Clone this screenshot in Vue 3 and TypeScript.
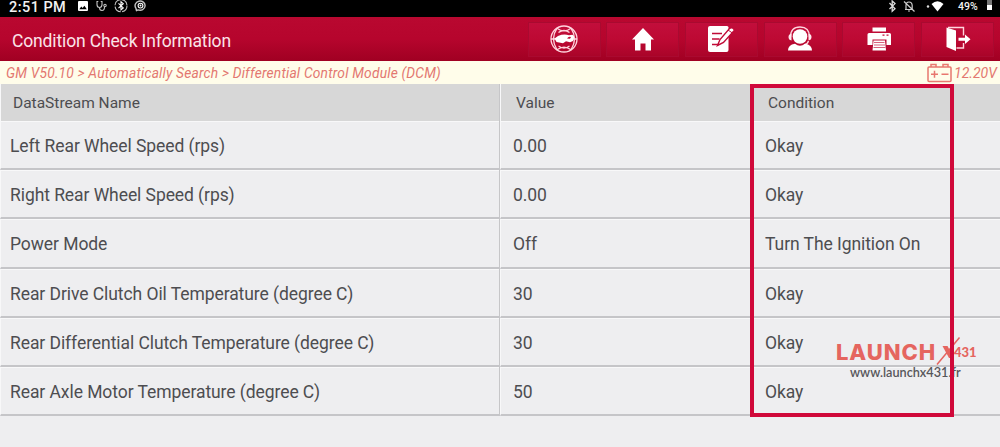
<template>
  <div class="screen">
    <div class="status">
      <span class="clock">2:51 PM</span>
      <svg class="status-left" width="76" height="17" viewBox="0 0 76 17">
        <path fill="#fff" fill-rule="evenodd" d="M2 1h8q1 0 1 1v8q0 1-1 1h-8q-1 0-1-1v-8q0-1 1-1zM2.300 9.300h7.500L7.400 5.700 5.600 8 4.300 6.500z" />
        <g fill="none" stroke="#c4c4c4" stroke-width="1.100">
          <path d="M21.300 1.500h-1.300v3q0 3 2.500 3t2.500-3v-3h-1.300M22.500 7.500q0 3 2.500 3t2.500-3.500" />
          <circle cx="28" cy="5.500" r="1.200" />
          <circle cx="44" cy="5.700" r="6" stroke-dasharray="8 1.400" />
          <path d="M41.500 3.300l4.800 4.600-2.300 2V1.700l2.300 2-4.800 4.500" stroke="#fff" />
          <path d="M59.500 10.500l-.6-2.300a5 4.600 0 1 1 2.200 1.700z" stroke-width="1.400" />
          <circle cx="63.500" cy="5.600" r="2.400" stroke="#fff" />
        </g>
        <circle cx="63.500" cy="5.600" r="1" fill="#fff" />
      </svg>
      <svg class="status-right" width="68" height="17" viewBox="0 0 68 17">
        <path d="M2.500 3l5.500 5.700-2.800 2.600V1l2.800 2.600L2.500 9" fill="none" stroke="#ddd" stroke-width="1.300" />
        <g fill="none" stroke="#ccc" stroke-width="1.200">
          <path d="M18 9.500h8M19 9V5.500q0-3.500 3-3.500t3.200 3.500V9M21 11h2M17 1.500l10.500 10" />
        </g>
        <circle cx="41" cy="6.500" r="1.200" fill="#ddd" />
        <path d="M44.500 4q6-5.500 12 0L50.500 11.500z" fill="#fff" />
      </svg>
      <span class="percent">49%</span>
      <span class="battery"></span>
    </div>

    <header class="topbar">
      <h1>Condition Check Information</h1>
      <nav>
        <button v-for="name in tools" :key="name" type="button" :aria-label="name">
          <svg v-if="name === 'globe'" width="30" height="30" viewBox="0 0 30 30">
            <g fill="none" stroke="#ffd5de" stroke-width="1.300">
              <circle cx="15" cy="15" r="13" />
              <path d="M8 4.200q7 5.300 14 0M8 25.800q7-5.300 14 0M8 4.200q-7 10.800 0 21.600M22 4.200q7 10.800 0 21.600M9.500 8.500q5.500-4 11 0M9.500 22q5.500 4 11 0" />
              <path d="M2 15h4M24 15h4" />
            </g>
            <path d="M5.500 14.500l3.500-2.500q6-2.500 11-.7l3.500-.6q2 1 1.500 3l-1 3.300-3 1.200-4-1-3 2-6.500-1.200z" fill="#fff" />
            <path d="M18 14.500q1.500-2.500 4-1.500l-1 1.800z" fill="#bd0932" />
          </svg>
          <svg v-else-if="name === 'home'" width="30" height="30" viewBox="0 0 30 30">
            <path d="M15 4L26 15.500h-3V26.500h-5.500v-7h-5v7H7V15.500H4z" fill="#fff" />
          </svg>
          <svg v-else-if="name === 'edit'" width="30" height="30" viewBox="0 0 30 30">
            <path d="M4 2h17q1.500 0 1.500 1.500V26q0 2-2 2H4q-2 0-2-2V4q0-2 2-2z" fill="#fff" />
            <path d="M6 9.500h10M6 15h7.500M6 20.500h7" stroke="#c00a37" stroke-width="1.500" />
            <path d="M11.500 21.500l2.500-6L23.500 4.500q3-2 5 1.700L17.500 18.500z" fill="#fff" stroke="#c00a37" stroke-width="1.400" />
            <path d="M22 6l4.700 3.200" stroke="#c00a37" />
          </svg>
          <svg v-else-if="name === 'support'" width="30" height="30" viewBox="0 0 30 30">
            <circle cx="15" cy="12.500" r="7.300" fill="#fff" />
            <path d="M5.500 13Q5.500 3 15 3t9.500 10M23.500 17q-1 3.500-4.500 4" fill="none" stroke="#ffd5de" stroke-width="1.300" />
            <path d="M6.500 9.500v7Q3.500 16 3.500 13t3-3.500zM23.500 9.500v7q3-.5 3-3.500t-3-3.500z" fill="#ffe9ee" />
            <path d="M3 26.500q0-5.500 7-6.700 5 3.700 10 0 7 1.200 7 6.700z" fill="#fff" />
          </svg>
          <svg v-else-if="name === 'print'" width="30" height="30" viewBox="0 0 30 30">
            <path d="M8.500 3.500h13.500v4H8.500zM5 9h20.500q1.500 0 1.500 1.500v10.500h-4.500v-5.500h-14V21H3.500V10.500Q3.500 9 5 9z" fill="#fff" />
            <path d="M9.500 16.500h11.500l1 10H8.500z" fill="#fff" />
            <path d="M10 18.500h10.500M10 21h11M9.500 23.500h12" stroke="#d7637d" stroke-width="1" />
            <path d="M18.500 11.200h2M22.500 11.200h2" stroke="#c00a37" stroke-width="1.300" />
          </svg>
          <svg v-else width="30" height="30" viewBox="0 0 30 30">
            <path d="M3.500 3.500L13 6.500v20.500L3.500 23z" fill="#fff" />
            <path d="M5 3.500h15.500v8M20.500 19v5h-7" fill="none" stroke="#ffd5de" stroke-width="1.400" />
            <path d="M15.500 13.700h6.500V10.500l5.500 4.700-5.500 4.700v-3.200h-6.500z" fill="#fff" />
          </svg>
        </button>
      </nav>
    </header>

    <div class="crumbs">
      <span class="path">GM V50.10 &gt; Automatically Search &gt; Differential Control Module (DCM)</span>
      <span class="voltage">
        <svg width="26" height="20" viewBox="0 0 26 20">
          <g fill="none" stroke="#e8776f" stroke-width="1.500">
            <rect x="1" y="4" width="23" height="14.500" rx="1" />
            <path d="M4 4V1.500h5V4M16 4V1.500h5V4M4 11.300h7M7.500 7.800v7M14.500 11.300h7" />
          </g>
        </svg>
        <span>12.20V</span>
      </span>
    </div>

    <div class="table">
      <div class="row head">
        <div v-for="col in columns" :key="col" class="cell">{{ col }}</div>
      </div>
      <div v-for="row in rows" :key="row.name" class="row">
        <div class="cell">{{ row.name }}</div>
        <div class="cell">{{ row.value }}</div>
        <div class="cell">{{ row.condition }}</div>
      </div>
    </div>

    <div class="watermark">
      <span class="brand">LAUNCH</span>
      <svg width="26" height="30" viewBox="0 0 26 30">
        <path d="M1 28.500L23.500 1.500" stroke="#e5655f" stroke-width="1.500" />
        <path d="M6.500 10h5l6.500 12h-5z" fill="#e5655f" />
      </svg>
      <span class="model">431</span>
      <span class="site">www.launchx431.fr</span>
    </div>
    <div class="highlight"></div>
  </div>
</template>

<script setup lang="ts">
interface StreamRow {
  name: string
  value: string
  condition: string
}

const tools: string[] = ['globe', 'home', 'edit', 'support', 'print', 'exit']
const columns: string[] = ['DataStream Name', 'Value', 'Condition']
const rows: StreamRow[] = [
  { name: 'Left Rear Wheel Speed (rps)', value: '0.00', condition: 'Okay' },
  { name: 'Right Rear Wheel Speed (rps)', value: '0.00', condition: 'Okay' },
  { name: 'Power Mode', value: 'Off', condition: 'Turn The Ignition On' },
  { name: 'Rear Drive Clutch Oil Temperature (degree C)', value: '30', condition: 'Okay' },
  { name: 'Rear Differential Clutch Temperature (degree C)', value: '30', condition: 'Okay' },
  { name: 'Rear Axle Motor Temperature (degree C)', value: '50', condition: 'Okay' },
]
</script>

<style>
body {
  margin: 0;
  background: #eeeef0;
}
</style>

<style scoped>
.screen {
  position: relative;
  width: 1000px;
  height: 447px;
  overflow: hidden;
  background: #eeeef0;
  font-family: Roboto, sans-serif;
  color: #4d4d50;
}
.status {
  display: flex;
  height: 17px;
  background: #000;
  color: #f2f2f2;
}
.clock {
  width: 68px;
  padding-left: 9px;
  font-size: 14.5px;
  line-height: 15px;
  font-weight: 500;
  letter-spacing: 0.45px;
  white-space: nowrap;
}
.status-right {
  margin-left: 734px;
}
.percent {
  width: 29px;
  margin-left: 3px;
  font-size: 10.5px;
  line-height: 13px;
  font-weight: 500;
}
.battery {
  width: 5px;
  height: 10px;
  background: linear-gradient(#777 50%, #fff 50%);
}
.topbar {
  display: flex;
  align-items: center;
  justify-content: space-between;
  height: 44px;
  box-sizing: border-box;
  padding: 0 6px 0 12px;
  background: linear-gradient(#b90830, #b6052d 50%, #a00022);
}
.topbar h1 {
  margin: 0;
  padding-top: 3px;
  font-size: 17.5px;
  letter-spacing: -0.14px;
  font-weight: 400;
  color: #fbe3e8;
  white-space: nowrap;
}
nav {
  display: flex;
  gap: 5.7px;
}
nav button {
  display: flex;
  align-items: center;
  justify-content: center;
  width: 73px;
  height: 35px;
  padding: 0;
  border: 1px solid #a90a30;
  background: linear-gradient(#c20e3b, #bd0933 50%, #aa0429);
}
.crumbs {
  display: flex;
  align-items: center;
  justify-content: space-between;
  height: 23px;
  padding: 0 3px 0 6px;
  background: #fffdea;
  color: #e37770;
  font-size: 13.8px;
  letter-spacing: 0.19px;
  font-style: italic;
  white-space: nowrap;
}
.voltage {
  display: flex;
  align-items: center;
  gap: 1px;
  font-size: 14px;
  letter-spacing: 0.05px;
}
.voltage span {
  padding-top: 1px;
}
.row {
  display: grid;
  grid-template-columns: 500px 252px 1fr;
  height: 49.2px;
}
.cell {
  display: flex;
  align-items: center;
  box-sizing: border-box;
  padding: 3px 0 0 12px;
  border-left: 1px solid #f8f8f9;
  border-right: 1px solid #c6c6c8;
  border-bottom: 2px solid #c5c5c8;
  box-shadow: inset 0 1px #f8f8f9;
  font-size: 17.5px;
  letter-spacing: -0.07px;
  white-space: nowrap;
}
.cell:first-child {
  padding-left: 9px;
}
.cell:nth-child(2) {
  border-right: none;
}
.cell:last-child {
  border-right: none;
}
.cell:nth-child(3) {
  border-left-color: transparent;
}
.head {
  height: 37px;
}
.head .cell {
  padding: 1px 0 0 15px;
  border-bottom: none;
  box-shadow: none;
  background: #d7d7d7;
  font-size: 15.5px;
  letter-spacing: 0;
}
.head .cell:first-child {
  padding-left: 12px;
}
.highlight {
  position: absolute;
  left: 750px;
  top: 84px;
  width: 204px;
  height: 333px;
  box-sizing: border-box;
  border: 4px solid #d0093a;
}
.watermark {
  position: absolute;
  left: 836px;
  top: 336px;
  display: grid;
  grid-template-columns: 100px 18px auto;
  grid-template-rows: 29px 16px;
  color: #e5655f;
  white-space: nowrap;
}
.brand {
  font-family: Inter, sans-serif;
  font-size: 22px;
  line-height: 32px;
  font-weight: 800;
  letter-spacing: 0.9px;
}
.model {
  font-family: Lato, sans-serif;
  font-size: 13px;
  line-height: 33px;
  font-weight: 900;
}
.site {
  grid-column: 1 / 4;
  padding-left: 14px;
  color: #56565a;
  font-family: Lato, sans-serif;
  font-size: 12.7px;
  line-height: 15px;
  font-weight: 600;
}
</style>
